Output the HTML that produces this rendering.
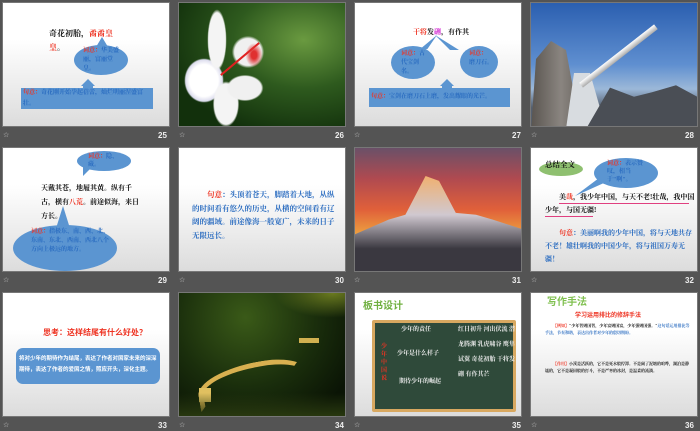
<!DOCTYPE html>
<html><head><meta charset="utf-8"><style>
*{margin:0;padding:0;box-sizing:border-box}
body{width:700px;height:431px;background:#545454;position:relative;overflow:hidden;font-family:"Liberation Serif","Noto Serif CJK SC",serif}
.s{position:absolute;width:168px;height:125px;overflow:hidden;border:1px solid #777}
.w{background:linear-gradient(#fff 30%,#dcdcdc)}
.n{position:absolute;color:#eee;font:bold 8px "Liberation Sans",sans-serif}
.st{position:absolute;color:#ccc;font:7px "Liberation Sans",sans-serif}
.a{position:absolute;font-size:7px;line-height:11px;font-weight:bold}
.r{color:#e32}.b{color:#2a6cc0}.k{color:#111}
.bub{position:absolute;background:#5b95d1;border-radius:50%}
</style></head><body>
<!-- row1 -->
<div class="s w" style="left:2px;top:2px">
 <div class="a k" style="left:46px;top:24px;width:72px;font-size:8px;line-height:14px">奇花初胎，<span class="r">矞矞皇皇</span>。</div>
 <div style="position:absolute;left:93px;top:34px;border:6px solid transparent;border-bottom:10px solid #5b95d1;width:0;border-top:0"></div>
 <div class="bub" style="left:71px;top:42px;width:54px;height:30px"></div>
 <div class="a b" style="left:80px;top:44px;width:40px;font-size:6px;line-height:9px"><span class="r">词意：</span>华美盛丽，富丽堂皇。</div>
 <div style="position:absolute;left:78px;top:76px;border:7px solid transparent;border-bottom:7px solid #5b95d1;border-top:0"></div>
 <div style="position:absolute;left:80px;top:83px;width:10px;height:3px;background:#5b95d1"></div>
 <div style="position:absolute;left:18px;top:85px;width:132px;height:21px;background:#5b95d1"></div>
 <div class="a b" style="left:20px;top:85px;width:130px;font-size:6px"><span class="r">句意：</span>奇花刚开始孕起蓓蕾，灿烂明丽涅盛富壮。</div>
</div>
<div class="n" style="left:158px;top:131px">25</div><div class="st" style="left:3px;top:131px">☆</div>

<div class="s" style="left:178px;top:2px;background:radial-gradient(ellipse at 75% 30%,#6a9a40,#2e5a1e 40%,#12300c 80%)">
 <div style="position:absolute;left:5px;top:55px;width:40px;height:45px;background:radial-gradient(ellipse,#fff 50%,#dde 65%,transparent 70%)"></div>
 <div style="position:absolute;left:27px;top:2px;width:22px;height:70px;background:radial-gradient(ellipse,#f4f4f4 55%,transparent 62%)"></div>
 <div style="position:absolute;left:32px;top:75px;width:30px;height:52px;background:radial-gradient(ellipse,#f4f4f4 55%,transparent 62%)"></div>
 <div style="position:absolute;left:45px;top:70px;width:42px;height:30px;background:radial-gradient(ellipse,#f0f0f0 55%,transparent 62%)"></div>
 <div style="position:absolute;left:50px;top:30px;width:38px;height:38px;background:radial-gradient(ellipse,#f0f0f0 50%,transparent 60%)"></div>
 <div style="position:absolute;left:36px;top:55px;width:50px;height:2px;background:#e02020;transform:rotate(-40deg)"></div>
 <div style="position:absolute;left:65px;top:38px;width:20px;height:28px;background:radial-gradient(#e03030 20%,transparent 60%)"></div>
</div>
<div class="n" style="left:335px;top:131px">26</div><div class="st" style="left:179px;top:131px">☆</div>

<div class="s w" style="left:354px;top:2px">
 <div class="a k" style="left:58px;top:24px"><span class="r">干将</span>发<span style="color:#d020d0">硎</span>，有作其</div>
 <div style="position:absolute;left:58px;top:32px;width:24px;height:14px;background:#5b95d1;clip-path:polygon(100% 0,30% 100%,60% 100%)"></div>
 <div style="position:absolute;left:80px;top:32px;width:30px;height:15px;background:#5b95d1;clip-path:polygon(0 0,50% 100%,80% 100%)"></div>
 <div class="bub" style="left:36px;top:43px;width:44px;height:33px"></div>
 <div class="bub" style="left:105px;top:43px;width:38px;height:32px"></div>
 <div class="a b" style="left:46px;top:47px;width:28px;font-size:6px;line-height:9px"><span class="r">词意：</span>古代宝剑名。</div>
 <div class="a b" style="left:114px;top:47px;width:24px;font-size:6px;line-height:9px"><span class="r">词意：</span>磨刀石。</div>
 <div style="position:absolute;left:85px;top:76px;border:7px solid transparent;border-bottom:7px solid #5b95d1;border-top:0"></div>
 <div style="position:absolute;left:87px;top:83px;width:10px;height:3px;background:#5b95d1"></div>
 <div style="position:absolute;left:14px;top:85px;width:141px;height:19px;background:#5b95d1"></div>
 <div class="a b" style="left:16px;top:89px;font-size:6px;white-space:nowrap"><span class="r">句意：</span>宝剑在磨刀石上磨，发出耀眼的光芒。</div>
</div>
<div class="n" style="left:512px;top:131px">27</div><div class="st" style="left:354px;top:131px">☆</div>

<div class="s" style="left:530px;top:2px;background:linear-gradient(#2b5fb0,#5f8fd0 50%,#9cb8d8 70%,#556070 85%)">
 <div style="position:absolute;left:0;top:38px;width:50px;height:90px;background:linear-gradient(90deg,#5a5550,#8a8580 60%,#6a6560);clip-path:polygon(10% 20%,40% 0,70% 10%,100% 100%,0 100%)"></div>
 <div style="position:absolute;left:35px;top:70px;width:40px;height:56px;background:#d8dce0;clip-path:polygon(20% 0,60% 0,100% 100%,0 100%)"></div>
 <div style="position:absolute;left:55px;top:80px;width:120px;height:46px;background:#4a4e55;clip-path:polygon(0 100%,20% 10%,40% 30%,55% 20%,75% 5%,100% 40%,100% 100%)"></div>
 <div style="position:absolute;left:40px;top:50px;width:95px;height:6px;background:linear-gradient(#fff,#aaa);transform:rotate(-38deg)"></div>
</div>
<div class="n" style="left:685px;top:131px">28</div><div class="st" style="left:531px;top:131px">☆</div>

<!-- row2 -->
<div class="s w" style="left:2px;top:147px">
 <div class="bub" style="left:74px;top:3px;width:54px;height:20px"></div>
 <div style="position:absolute;left:80px;top:18px;width:10px;height:10px;background:#5b95d1;clip-path:polygon(0 0,100% 0,0 100%)"></div>
 <div class="a b" style="left:85px;top:5px;width:38px;font-size:6px;line-height:8px"><span class="r">词意：</span>隐、藏。</div>
 <div class="a k" style="left:38px;top:33px;width:100px;line-height:14px">天戴其苍，地履其黄。纵有千古，横有<span class="r">八荒</span>。前途似海，来日方长。</div>
 <div style="position:absolute;left:50px;top:58px;width:20px;height:32px;background:#5b95d1;clip-path:polygon(50% 0,0 100%,100% 100%)"></div>
 <div class="bub" style="left:10px;top:77px;width:104px;height:46px"></div>
 <div class="a b" style="left:28px;top:80px;width:80px;font-size:6px;line-height:9px"><span class="r">词意：</span>指极东、南、西、北、东南、东北、西南、西北八个方向上极远的地方。</div>
</div>
<div class="n" style="left:158px;top:276px">29</div><div class="st" style="left:3px;top:276px">☆</div>

<div class="s w" style="left:178px;top:147px">
 <div class="a b" style="left:13px;top:40px;width:145px;line-height:13.5px;font-size:7.5px">&emsp;&emsp;<span class="r">句意</span>：头顶着苍天，脚踏着大地，从纵的时间看有悠久的历史，从横的空间看有辽阔的疆域。前途像海一般宽广，未来的日子无限远长。</div>
</div>
<div class="n" style="left:335px;top:276px">30</div><div class="st" style="left:179px;top:276px">☆</div>

<div class="s" style="left:354px;top:147px;background:linear-gradient(#6a5068,#b04a50 25%,#e0603a 50%,#f0b040 75%)">
 <div style="position:absolute;left:0;top:28px;width:168px;height:97px;background:linear-gradient(#f0b070,#d0c8d0 40%,#3a3840 75%);clip-path:polygon(0 60%,20% 45%,30% 40%,42% 0,50% 5%,60% 38%,72% 40%,82% 45%,100% 55%,100% 100%,0 100%)"></div>
</div>
<div class="n" style="left:512px;top:276px">31</div><div class="st" style="left:354px;top:276px">☆</div>

<div class="s w" style="left:530px;top:147px">
 <div style="position:absolute;left:8px;top:14px;width:44px;height:14px;border-radius:50%;background:#8fc070"></div>
 <div class="a k" style="left:14px;top:12px;width:38px;font-size:7.5px;line-height:10px">总结全文</div>
 <div class="bub" style="left:63px;top:10px;width:64px;height:30px"></div>
 <div style="position:absolute;left:44px;top:30px;width:40px;height:18px;background:#5b95d1;clip-path:polygon(60% 0,100% 0,0 100%)"></div>
 <div class="a b" style="left:76px;top:12px;width:46px;font-size:6px;line-height:8px"><span class="r">词意：</span>表示赞叹，相当于"啊"。</div>
 <div class="a k" style="left:14px;top:43px;width:150px;line-height:13px">&emsp;&emsp;美<span class="r">哉</span>，我少年中国，与天不老!壮哉，我中国少年，与国无疆!</div>
 <div style="position:absolute;left:28px;top:55px;width:130px;height:1px;background:#e04080"></div>
 <div style="position:absolute;left:14px;top:68px;width:48px;height:1px;background:#e04080"></div>
 <div class="a b" style="left:14px;top:79px;width:150px;line-height:13px">&emsp;&emsp;<span class="r">句意</span>：美丽啊我的少年中国，将与天地共存不老！雄壮啊我的中国少年，将与祖国万寿无疆！</div>
</div>
<div class="n" style="left:685px;top:276px">32</div><div class="st" style="left:531px;top:276px">☆</div>

<!-- row3 -->
<div class="s w" style="left:2px;top:292px">
 <div class="a r" style="left:40px;top:34px;font-size:8px;font-family:'Liberation Sans','Noto Sans CJK SC',sans-serif">思考：这样结尾有什么好处？</div>
 <div style="position:absolute;left:13px;top:55px;width:144px;height:36px;background:#5b95d1;border-radius:7px"></div>
 <div class="a" style="left:16px;top:61px;width:140px;color:#fff;font-size:5.5px;line-height:11px;font-family:'Liberation Sans','Noto Sans CJK SC',sans-serif">将对少年的期待作为结尾，表达了作者对国家未来的深深期待，表达了作者的爱国之情，照应开头，深化主题。</div>
</div>
<div class="n" style="left:158px;top:421px">33</div><div class="st" style="left:3px;top:421px">☆</div>

<div class="s" style="left:178px;top:292px;background:radial-gradient(ellipse at 40% 20%,#3a5a18,#1a2e0c 50%,#0a1405 85%)">
 <div style="position:absolute;left:95px;top:0;width:73px;height:25px;background:radial-gradient(ellipse at 80% 0,#6a7a20,transparent 70%)"></div>
 <div style="position:absolute;left:18px;top:70px;width:110px;height:40px;border:5px solid #d8b050;border-color:#d8b050 transparent transparent #d8b050;border-radius:60% 40% 0 0;transform:rotate(-10deg)"></div>
 <div style="position:absolute;left:20px;top:95px;width:12px;height:14px;background:#e0c060"></div>
 <div style="position:absolute;left:120px;top:45px;width:20px;height:5px;background:#d0b050"></div>
 <div style="position:absolute;left:0;top:100px;width:168px;height:25px;background:linear-gradient(transparent,#2a3a10)"></div>
</div>
<div class="n" style="left:335px;top:421px">34</div><div class="st" style="left:179px;top:421px">☆</div>

<div class="s w" style="left:354px;top:292px">
 <div class="a" style="left:8px;top:8px;color:#70b040;font-size:10px;font-family:'Liberation Sans','Noto Sans CJK SC',sans-serif">板书设计</div>
 <div style="position:absolute;left:17px;top:27px;width:144px;height:92px;background:#2f4a3a;border:3px solid #d8a860;border-radius:2px"></div>
 <div class="a r" style="left:26px;top:50px;width:8px;font-size:6px;line-height:8px">少年中国说</div>
 <div class="a" style="left:46px;top:32px;color:#eee;font-size:6px">少年的责任</div>
 <div class="a" style="left:42px;top:56px;color:#eee;font-size:6px">少年是什么样子</div>
 <div class="a" style="left:44px;top:84px;color:#eee;font-size:6px">期待少年的崛起</div>
 <div class="a" style="left:103px;top:30px;color:#eee;font-size:6px;line-height:15px;width:60px">红日初升 河出伏流 潜龙腾渊 乳虎啸谷 鹰隼试翼 奇花初胎 干将发硎 有作其芒</div>
</div>
<div class="n" style="left:512px;top:421px">35</div><div class="st" style="left:354px;top:421px">☆</div>

<div class="s w" style="left:530px;top:292px">
 <div class="a" style="left:16px;top:4px;color:#80c050;font-size:10px;font-family:'Liberation Sans','Noto Sans CJK SC',sans-serif">写作手法</div>
 <div class="a r" style="left:44px;top:18px;font-size:6px;font-family:'Liberation Sans','Noto Sans CJK SC',sans-serif">学习运用排比的修辞手法</div>
 <div class="a k" style="left:14px;top:30px;width:146px;font-size:4px;line-height:6.5px">&emsp;&emsp;<span class="r">【例如】</span>"少年智则国智，少年富则国富，少年强则国强。"<span class="b">这句话运用排比等手法，节奏和谐，表达出作者对少年的殷切期盼。</span></div>
 <div class="a k" style="left:14px;top:68px;width:146px;font-size:4px;line-height:6.5px">&emsp;&emsp;<span class="r">【作用】</span>小溪是活跃的，它不是死水般停滞。不是闹了泥塘的喧哗，湖泊是静谧的，它不是凝固般的打斗，不是严寒的冰封，是温柔的流淌。</div>
</div>
<div class="n" style="left:685px;top:421px">36</div><div class="st" style="left:531px;top:421px">☆</div>
</body></html>
